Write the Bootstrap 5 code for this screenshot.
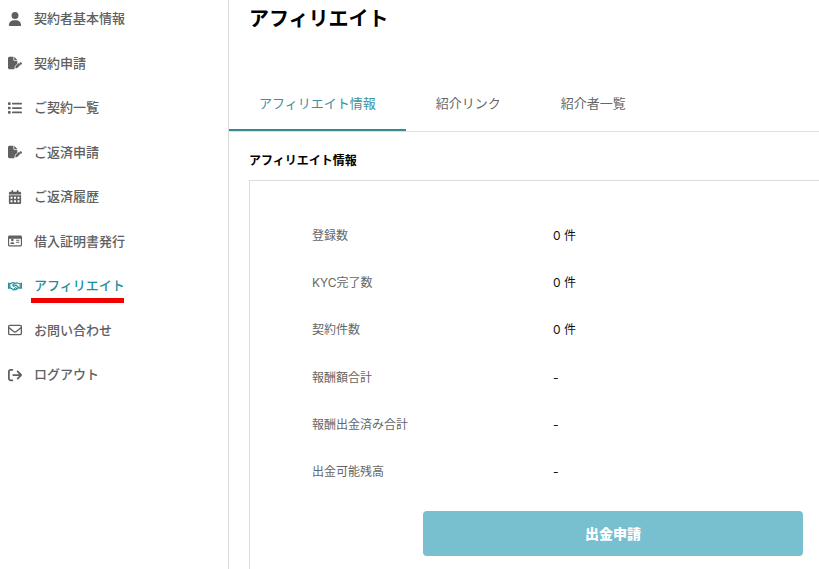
<!DOCTYPE html>
<html lang="ja">
<head>
<meta charset="utf-8">
<meta name="viewport" content="width=device-width, initial-scale=1">
<title>アフィリエイト</title>
<link href="https://cdn.jsdelivr.net/npm/bootstrap@5.3.0/dist/css/bootstrap.min.css" rel="stylesheet">
<style>
body{font-family:Inter,"Noto Sans CJK JP",sans-serif;font-size:12px;line-height:18px;color:#111;background:#fff}
.side{width:229px;border-right:1px solid #dcdcdc}
.side .nav{margin-top:-4px}
.side .nav-link{height:44.5px;padding:0 0 0 8px;gap:12px;color:#606060;font-size:13px;font-weight:500;white-space:nowrap}
.side .nav-link.active{color:#1d909c}
.side svg{width:14px;height:14px;margin-top:1px;flex:none;fill:currentColor}
.side .outline-icon{fill:none;stroke:currentColor;stroke-width:52;stroke-linejoin:round;stroke-linecap:round}
.marked::after{content:"";position:absolute;left:-3px;right:1px;top:22px;height:5px;background:#f00000}
.page-title{font-size:20px;line-height:30px;font-weight:700;margin:4px 0 0 20px;color:#000}
.tabs{margin-top:42px;height:56px;border-bottom:1px solid #dfe0e1}
.tabs .nav-link{height:55px;padding:0 30px;color:#666;font-size:13px;border-bottom:2px solid transparent}
.tabs .nav-link.active{color:#3a919e;border-bottom-color:#388894}
.sub-title{font-size:12px;line-height:18px;font-weight:700;margin:20px 0 10px 20px;color:#000}
.panel{margin-left:20px;border:1px solid #dcdcdc;border-width:1px 0 0 1px;padding:31.6px 16px 0 62px}
.item{height:47.15px}
.item dt{width:241px;font-weight:400;color:#666}
.item dd{margin:0}
.btn-pay{width:380px;height:45px;background:#78bfcf;color:#fff;font-size:14px;font-weight:900;border:0;border-radius:4px;margin-top:15.4px}
</style>
</head>
<body class="overflow-hidden">
<svg class="d-none">
<symbol id="filepen" viewBox="0 0 576 512"><path d="M0 64C0 29 29 0 64 0h160v128c0 18 14 32 32 32h128v126L299 371c-9 9-15 20-18 32l-19 76c-3 11-2 23 2 33H64c-35 0-64-29-64-64V64zm384 64H256V0l128 128zm165 110 15 15c16 15 16 41 0 56l-30 30-71-71 30-29c15-16 41-16 56-1zM322 379l118-118 71 71-118 118c-4 4-9 7-15 8l-60 15c-5 1-11 0-15-4s-6-10-4-15l15-60c1-6 4-11 8-15z"/></symbol>
</svg>
<div class="d-flex vh-100">
<aside class="side flex-shrink-0">
<nav class="nav flex-column flex-nowrap">
<a class="nav-link d-flex align-items-center" href="#"><svg viewBox="0 0 448 512"><path d="M224 256A128 128 0 1 0 224 0a128 128 0 1 0 0 256zm-45.7 48C79.8 304 0 383.8 0 482.3C0 498.7 13.3 512 29.7 512H418.3c16.4 0 29.7-13.3 29.7-29.7C448 383.8 368.2 304 269.7 304H178.3z"/></svg><span>契約者基本情報</span></a>
<a class="nav-link d-flex align-items-center" href="#"><svg><use href="#filepen"/></svg><span>契約申請</span></a>
<a class="nav-link d-flex align-items-center" href="#"><svg viewBox="0 0 512 512"><path d="M24 48h48a24 24 0 0 1 24 24v48a24 24 0 0 1-24 24H24a24 24 0 0 1-24-24V72a24 24 0 0 1 24-24zm152 16h304a32 32 0 0 1 0 64H176a32 32 0 0 1 0-64zm0 160h304a32 32 0 0 1 0 64H176a32 32 0 0 1 0-64zm0 160h304a32 32 0 0 1 0 64H176a32 32 0 0 1 0-64zM24 208h48a24 24 0 0 1 24 24v48a24 24 0 0 1-24 24H24a24 24 0 0 1-24-24v-48a24 24 0 0 1 24-24zm0 160h48a24 24 0 0 1 24 24v48a24 24 0 0 1-24 24H24a24 24 0 0 1-24-24v-48a24 24 0 0 1 24-24z"/></svg><span>ご契約一覧</span></a>
<a class="nav-link d-flex align-items-center" href="#"><svg><use href="#filepen"/></svg><span>ご返済申請</span></a>
<a class="nav-link d-flex align-items-center" href="#"><svg viewBox="0 0 448 512"><path fill-rule="evenodd" d="M128 0c17.7 0 32 14.3 32 32V64H288V32c0-17.7 14.3-32 32-32s32 14.3 32 32V64h48c26.5 0 48 21.5 48 48v48H0V112C0 85.5 21.5 64 48 64H96V32c0-17.7 14.3-32 32-32zM0 192H448V464c0 26.5-21.5 48-48 48H48c-26.5 0-48-21.5-48-48V192zm60 56v72h72v-72zm128 0v72h72v-72zm128 0v72h72v-72zM60 376v72h72v-72zm128 0v72h72v-72zm128 0v72h72v-72z"/></svg><span>ご返済履歴</span></a>
<a class="nav-link d-flex align-items-center" href="#"><svg viewBox="0 0 576 512"><path fill-rule="evenodd" d="M64 32h448c35 0 64 29 64 64v320c0 35-29 64-64 64H64c-35 0-64-29-64-64V96c0-35 29-64 64-64zM48 160v256c0 9 7 16 16 16h448c9 0 16-7 16-16V160zm80 50a52 52 0 1 1 104 0 52 52 0 0 1-104 0zm-32 174c0-40 28-80 64-80h40c36 0 64 40 64 80zm240-176h128v40H336zm0 80h128v40H336z"/></svg><span>借入証明書発行</span></a>
<a class="nav-link active d-flex align-items-center" href="#"><svg class="outline-icon" viewBox="0 0 640 512"><path d="M24 118v240h60V138M616 118v240h-60V138M84 148l60-12c42-30 92-42 142-18l30 16c48-28 104-32 158-4l82 18M84 344h40l104 74c42 30 76 26 98-2 36 16 66 4 76-28 34 4 56-18 54-44h100M316 134 216 220c-4 36 44 60 84 32l60-44 110 104M286 366l42 42M350 324l48 48"/></svg><span class="position-relative marked">アフィリエイト</span></a>
<a class="nav-link d-flex align-items-center" href="#"><svg viewBox="0 0 512 512"><path d="M64 112c-8.8 0-16 7.2-16 16v22.1L220.5 291.7c20.7 17 50.4 17 71.1 0L464 150.1V128c0-8.8-7.2-16-16-16H64zM48 212.2V384c0 8.8 7.2 16 16 16H448c8.8 0 16-7.2 16-16V212.2L322 328.8c-38.4 31.5-93.7 31.5-132 0L48 212.2zM0 128C0 92.7 28.7 64 64 64H448c35.3 0 64 28.7 64 64V384c0 35.3-28.7 64-64 64H64c-35.3 0-64-28.7-64-64V128z"/></svg><span>お問い合わせ</span></a>
<a class="nav-link d-flex align-items-center" href="#"><svg viewBox="0 0 512 512"><path d="M160 32H96C43 32 0 75 0 128v256c0 53 43 96 96 96h64a32 32 0 0 0 0-64H96c-18 0-32-14-32-32V128c0-18 14-32 32-32h64a32 32 0 0 0 0-64zm343 247c12-13 12-33 0-46L375 105c-30-30-75 15-45 45l73 74H192a32 32 0 0 0 0 64h211l-73 74c-30 30 15 75 45 45z"/></svg><span>ログアウト</span></a>
</nav>
</aside>
<main class="flex-grow-1 d-flex flex-column">
<h1 class="page-title">アフィリエイト</h1>
<nav class="nav tabs flex-nowrap flex-shrink-0">
<a class="nav-link active d-flex align-items-center" href="#">アフィリエイト情報</a>
<a class="nav-link d-flex align-items-center" href="#">紹介リンク</a>
<a class="nav-link d-flex align-items-center" href="#">紹介者一覧</a>
</nav>
<h2 class="sub-title">アフィリエイト情報</h2>
<section class="panel flex-grow-1">
<dl class="mb-0">
<div class="item d-flex align-items-center"><dt>登録数</dt><dd>0 件</dd></div>
<div class="item d-flex align-items-center"><dt>KYC完了数</dt><dd>0 件</dd></div>
<div class="item d-flex align-items-center"><dt>契約件数</dt><dd>0 件</dd></div>
<div class="item d-flex align-items-center"><dt>報酬額合計</dt><dd>-</dd></div>
<div class="item d-flex align-items-center"><dt>報酬出金済み合計</dt><dd>-</dd></div>
<div class="item d-flex align-items-center"><dt>出金可能残高</dt><dd>-</dd></div>
</dl>
<div class="d-flex justify-content-end"><button type="button" class="btn btn-pay">出金申請</button></div>
</section>
</main>
</div>
<script src="https://cdn.jsdelivr.net/npm/bootstrap@5.3.0/dist/js/bootstrap.bundle.min.js"></script>
</body>
</html>
